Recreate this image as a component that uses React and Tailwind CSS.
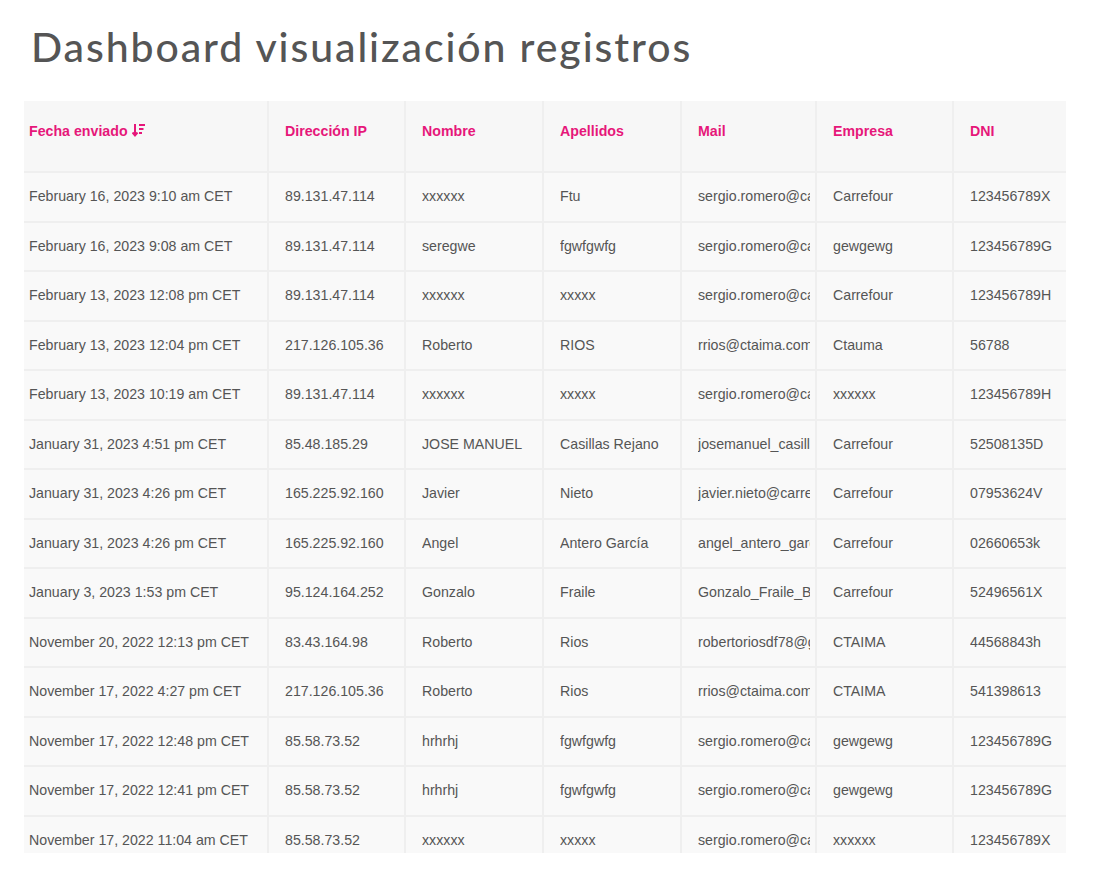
import React from "react";

const rows = [
  ["February 16, 2023 9:10 am CET", "89.131.47.114", "xxxxxx", "Ftu", "sergio.romero@carrefour.com", "Carrefour", "123456789X"],
  ["February 16, 2023 9:08 am CET", "89.131.47.114", "seregwe", "fgwfgwfg", "sergio.romero@carrefour.com", "gewgewg", "123456789G"],
  ["February 13, 2023 12:08 pm CET", "89.131.47.114", "xxxxxx", "xxxxx", "sergio.romero@carrefour.com", "Carrefour", "123456789H"],
  ["February 13, 2023 12:04 pm CET", "217.126.105.36", "Roberto", "RIOS", "rrios@ctaima.com", "Ctauma", "56788"],
  ["February 13, 2023 10:19 am CET", "89.131.47.114", "xxxxxx", "xxxxx", "sergio.romero@carrefour.com", "xxxxxx", "123456789H"],
  ["January 31, 2023 4:51 pm CET", "85.48.185.29", "JOSE MANUEL", "Casillas Rejano", "josemanuel_casillas@carrefour.com", "Carrefour", "52508135D"],
  ["January 31, 2023 4:26 pm CET", "165.225.92.160", "Javier", "Nieto", "javier.nieto@carrefour.com", "Carrefour", "07953624V"],
  ["January 31, 2023 4:26 pm CET", "165.225.92.160", "Angel", "Antero García", "angel_antero_garcia@carrefour.com", "Carrefour", "02660653k"],
  ["January 3, 2023 1:53 pm CET", "95.124.164.252", "Gonzalo", "Fraile", "Gonzalo_Fraile_B@carrefour.com", "Carrefour", "52496561X"],
  ["November 20, 2022 12:13 pm CET", "83.43.164.98", "Roberto", "Rios", "robertoriosdf78@gmail.com", "CTAIMA", "44568843h"],
  ["November 17, 2022 4:27 pm CET", "217.126.105.36", "Roberto", "Rios", "rrios@ctaima.com", "CTAIMA", "541398613"],
  ["November 17, 2022 12:48 pm CET", "85.58.73.52", "hrhrhj", "fgwfgwfg", "sergio.romero@carrefour.com", "gewgewg", "123456789G"],
  ["November 17, 2022 12:41 pm CET", "85.58.73.52", "hrhrhj", "fgwfgwfg", "sergio.romero@carrefour.com", "gewgewg", "123456789G"],
  ["November 17, 2022 11:04 am CET", "85.58.73.52", "xxxxxx", "xxxxx", "sergio.romero@carrefour.com", "xxxxxx", "123456789X"],
];

const headers = ["Fecha enviado", "Dirección IP", "Nombre", "Apellidos", "Mail", "Empresa", "DNI"];
const widths = [244, 137, 138, 138, 135, 137, 113];

function SortIcon() {
  return (
    <svg width="14" height="15" viewBox="0 0 14 15" fill="none" stroke="#e6177a" strokeWidth="2" className="inline-block ml-[4px] -mt-[3px] align-middle">
      <path d="M3 1 V12" />
      <path d="M0.5 9.5 L3 12.5 L5.5 9.5" />
      <path d="M7 2 H13" />
      <path d="M7 6 H11.5" />
      <path d="M7 10 H10" />
    </svg>
  );
}

export default function App() {
  return (
    <div className="bg-white w-[1099px] h-[890px] overflow-hidden" style={{ fontFamily: "'Liberation Sans', Arial, sans-serif" }}>
      <h1
        className="pl-[31px] pt-[21px] text-[41px] leading-[52px] text-[#555555] font-medium tracking-[1.9px]"
        style={{ fontFamily: "Lato, 'Open Sans', sans-serif" }}
      >
        Dashboard visualización registros
      </h1>
      <div className="ml-[24px] mt-[28px] w-[1042px] h-[752px] overflow-hidden bg-[#f8f8f8]">
        <table className="table-fixed border-collapse w-[1042px] text-[14.2px] text-[#555555]">
          <colgroup>
            {widths.map((w, i) => (
              <col key={i} style={{ width: w }} />
            ))}
          </colgroup>
          <thead>
            <tr className="h-[71px] bg-[#f7f7f7]">
              {headers.map((h, i) => (
                <th
                  key={h}
                  className={`align-top pt-[20px] text-left font-bold text-[#e6177a] border-r-2 border-b-2 border-[#efefef] last:border-r-0 ${i === 0 ? "pl-[5px]" : "pl-[16px]"}`}
                >
                  {h}
                  {i === 0 && <SortIcon />}
                </th>
              ))}
            </tr>
          </thead>
          <tbody>
            {rows.map((r, ri) => (
              <tr key={ri} className="h-[49.5px] bg-[#f9f9f9]">
                {r.map((c, ci) => (
                  <td
                    key={ci}
                    className={`align-middle whitespace-nowrap border-r-2 border-b-2 border-[#efefef] last:border-r-0 ${ci === 0 ? "pl-[5px]" : "pl-[16px]"} ${ci === 4 ? "pr-[5px]" : ""}`}
                  >
                    <div className="overflow-hidden">{c}</div>
                  </td>
                ))}
              </tr>
            ))}
          </tbody>
        </table>
      </div>
    </div>
  );
}
